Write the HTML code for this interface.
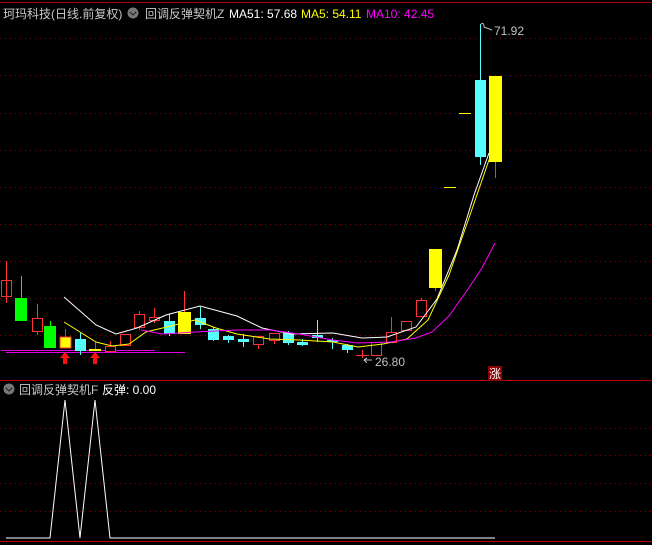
<!DOCTYPE html>
<html><head><meta charset="utf-8"><style>
html,body{margin:0;padding:0;background:#000;width:652px;height:545px;overflow:hidden}
svg{display:block}
text{font-family:"Liberation Sans","Noto Sans CJK SC",sans-serif;font-size:12px}
</style></head><body>
<svg width="652" height="545" viewBox="0 0 652 545" xmlns="http://www.w3.org/2000/svg" shape-rendering="crispEdges">
<rect width="652" height="545" fill="#000"/>
<line x1="0" y1="2.5" x2="652" y2="2.5" stroke="#b00000"/>
<g stroke="#8a0000" stroke-dasharray="1,4">
<line x1="0" y1="38.5" x2="652" y2="38.5"/><line x1="0" y1="75.5" x2="652" y2="75.5"/>
<line x1="0" y1="113.5" x2="652" y2="113.5"/><line x1="0" y1="150.5" x2="652" y2="150.5"/>
<line x1="0" y1="187.5" x2="652" y2="187.5"/><line x1="0" y1="224.5" x2="652" y2="224.5"/>
<line x1="0" y1="261.5" x2="652" y2="261.5"/><line x1="0" y1="298.5" x2="652" y2="298.5"/>
<line x1="0" y1="335.5" x2="652" y2="335.5"/>
<line x1="0" y1="428.5" x2="652" y2="428.5"/><line x1="0" y1="455.5" x2="652" y2="455.5"/>
<line x1="0" y1="483.5" x2="652" y2="483.5"/><line x1="0" y1="511.5" x2="652" y2="511.5"/>
</g>
<line x1="0" y1="380.5" x2="652" y2="380.5" stroke="#c00000"/>
<line x1="0" y1="541.5" x2="652" y2="541.5" stroke="#c00000"/>

<!-- header -->
<text x="3" y="18" fill="#c8c8c8">珂玛科技(日线.前复权)</text>
<circle cx="133" cy="13" r="5.5" fill="#777"/><path d="M130 12 l3 3 l3 -3" stroke="#222" fill="none" stroke-width="1.3"/>
<text x="145" y="18" fill="#c8c8c8">回调反弹契机Z</text>
<text x="229" y="18" fill="#fff">MA51: 57.68</text>
<text x="301" y="18" fill="#ff0">MA5: 54.11</text>
<text x="366" y="18" fill="#f0f">MA10: 42.45</text>

<!-- magenta horizontal -->
<line x1="1" y1="350.5" x2="155" y2="350.5" stroke="#e000e0"/>
<line x1="6" y1="352.5" x2="185" y2="352.5" stroke="#e000e0"/>

<!-- candles -->
<g stroke-width="1">
<!-- red hollow -->
<g stroke="#ff3232" fill="none">
<line x1="6.5" y1="261" x2="6.5" y2="303"/><rect x="1.5" y="280.5" width="10" height="16"/>
<line x1="37.5" y1="304" x2="37.5" y2="335"/><rect x="32.5" y="318.5" width="10" height="13" fill="#000"/>
<line x1="110.5" y1="341" x2="110.5" y2="351"/><rect x="105.5" y="346.5" width="10" height="5" fill="#000"/>
<rect x="120.5" y="334.5" width="10" height="11"/>
<line x1="139.5" y1="311" x2="139.5" y2="330"/><rect x="134.5" y="314.5" width="10" height="13" fill="#000"/>
<line x1="154.5" y1="308" x2="154.5" y2="323"/><rect x="149.5" y="317.5" width="10" height="3" fill="#000"/>
<line x1="258.5" y1="336" x2="258.5" y2="349"/><rect x="253.5" y="336.5" width="10" height="8" fill="#000"/>
<line x1="274.5" y1="333" x2="274.5" y2="344"/><rect x="269.5" y="333.5" width="10" height="7" fill="#000"/>
<line x1="362.5" y1="350" x2="362.5" y2="358"/><line x1="356" y1="355.5" x2="369" y2="355.5"/>
<rect x="371.5" y="342.5" width="10" height="13" fill="#000"/>
<line x1="391.5" y1="317" x2="391.5" y2="332"/><rect x="386.5" y="332.5" width="10" height="10" fill="#000"/>
<rect x="401.5" y="321.5" width="10" height="9"/>
<line x1="421.5" y1="298" x2="421.5" y2="300"/><rect x="416.5" y="300.5" width="10" height="16" fill="#000"/>
<line x1="495.5" y1="162" x2="495.5" y2="178"/>
</g>
<!-- green -->
<g fill="#00ff00" stroke="none">
<rect x="15" y="298" width="12" height="23"/><rect x="21" y="276" width="1" height="22" fill="#00ff00"/>
<rect x="44" y="326" width="12" height="22"/><rect x="50" y="321" width="1" height="5"/>
</g>
<!-- yellow -->
<g fill="#ffff00">
<rect x="65" y="329" width="1" height="8" fill="#ff3232"/>
<rect x="60" y="337" width="11" height="11" stroke="#ff3232" stroke-width="1"/>
<rect x="95" y="342" width="1" height="7" fill="#ff3232"/>
<rect x="89" y="349" width="12" height="2"/>
<rect x="184" y="291" width="1" height="21" fill="#ff3232"/>
<rect x="178" y="312" width="13" height="22"/>
<rect x="429" y="249" width="13" height="39"/>
<rect x="435" y="288" width="1" height="3" fill="#ff3232"/>
<rect x="444" y="187" width="12" height="1"/>
<rect x="459" y="113" width="12" height="1"/>
<rect x="489" y="76" width="13" height="86"/>
</g>
<!-- cyan -->
<g fill="#55ffff">
<rect x="80" y="333" width="1" height="22"/><rect x="75" y="339" width="11" height="12"/>
<rect x="169" y="314" width="1" height="22"/><rect x="164" y="321" width="11" height="13"/>
<rect x="200" y="307" width="1" height="22"/><rect x="195" y="318" width="11" height="7"/>
<rect x="213" y="327" width="1" height="14"/><rect x="208" y="329" width="11" height="11"/>
<rect x="228" y="335" width="1" height="8"/><rect x="223" y="336" width="11" height="4"/>
<rect x="243" y="334" width="1" height="13"/><rect x="238" y="339" width="11" height="3"/>
<rect x="288" y="331" width="1" height="14"/><rect x="283" y="333" width="11" height="10"/>
<rect x="302" y="339" width="1" height="7"/><rect x="297" y="342" width="11" height="3"/>
<rect x="317" y="320" width="1" height="22"/><rect x="312" y="335" width="11" height="3"/>
<rect x="332" y="338" width="1" height="11"/><rect x="327" y="340" width="11" height="2"/>
<rect x="347" y="344" width="1" height="9"/><rect x="342" y="345" width="11" height="5"/>
<rect x="480" y="24" width="1" height="141"/><rect x="475" y="80" width="11" height="77"/>
</g>
</g>

<!-- MA lines -->
<g fill="none" stroke-width="1" shape-rendering="auto">
<polyline stroke="#fff" points="64,297 96,325 116,334 137,328 166,315 200,306 237,316 262,328 291,334 333,333 362,338 387,337 416,327 437,299 457,250 474,195 489,153"/>
<polyline stroke="#ff0" points="64,322 96,342 112,346 129,344 146,332 175,325 195,320 216,328 237,334 270,339 299,340 333,342 358,347 383,344 407,339 428,320 449,275 470,215 489,160 495,149"/>
<polyline stroke="#f0f" points="141,330 162,334 179,333 195,332 237,330 270,330 299,334 333,340 358,343 391,342 416,338 432,332 449,316 466,292 482,268 495,243"/>
</g>

<!-- arrows -->
<g fill="#ff1010">
<path d="M65 352 l-5 6 h3 v6 h4 v-6 h3 z"/>
<path d="M95 352 l-5 6 h3 v6 h4 v-6 h3 z"/>
</g>

<!-- labels -->
<path d="M481 24 q3 -2 3 3 l8 3" stroke="#bbb" fill="none" shape-rendering="auto"/>
<text x="494" y="35" fill="#c0c0c0">71.92</text>
<path d="M372 360 l-8 0 M364 360 l3 -2 M364 360 l3 3" stroke="#bbb" fill="none"/>
<text x="375" y="366" fill="#c0c0c0">26.80</text>
<rect x="488" y="366" width="14" height="15" fill="#8b0000"/>
<text x="489" y="378" fill="#fff" style="font-size:12px">涨</text>

<!-- lower panel -->
<circle cx="9" cy="389" r="5.5" fill="#777"/><path d="M6 388 l3 3 l3 -3" stroke="#222" fill="none" stroke-width="1.3"/>
<text x="19" y="394" fill="#c8c8c8">回调反弹契机F</text>
<text x="102" y="394" fill="#fff">反弹: 0.00</text>
<polyline fill="none" stroke="#fff" shape-rendering="auto" points="6,538 50,538 65,400 80,538 95,400 110,538 495,538"/>
</svg>
</body></html>
